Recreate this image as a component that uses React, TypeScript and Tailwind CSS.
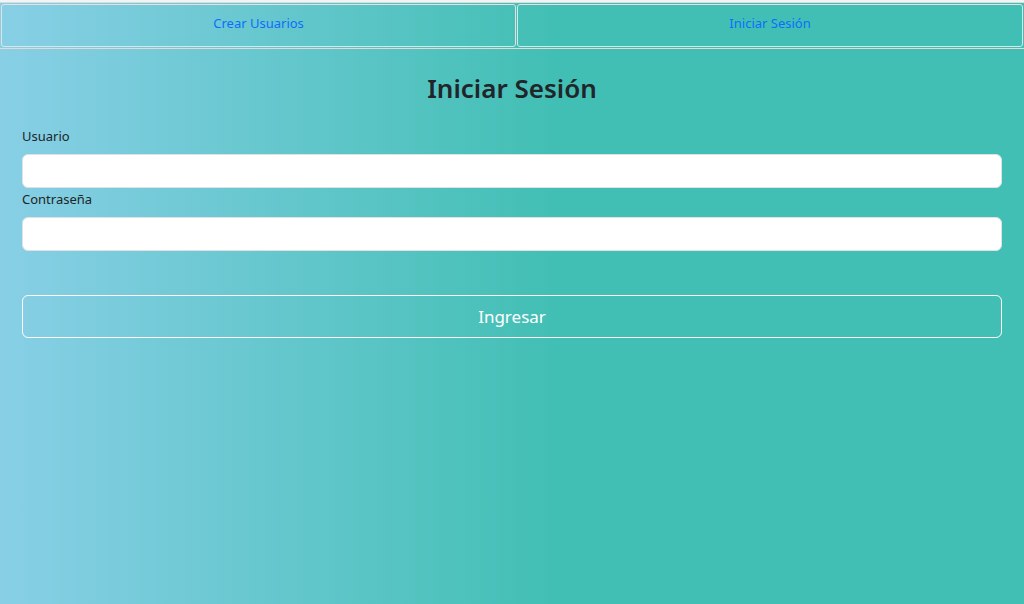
export default function App() {
    return (
        <div className="min-h-[604px] bg-[linear-gradient(to_right,#88cfe6_0%,#42bfb4_54%,#41bfb4_100%)] font-['Noto_Sans',sans-serif] text-[#212529]">
            <div className="h-[2px] bg-[#f3f3f3]" />
            <nav className="flex gap-[1px] border-y border-[#dcdcdc] p-[1px]">
                <button className="h-[43px] flex-auto rounded-[3px] border border-[#e2e2e2] pb-[4px] text-[13px] text-[#0d6efd]">
                    Crear Usuarios
                </button>
                <button className="h-[43px] flex-auto rounded-[3px] border border-[#e2e2e2] pb-[4px] text-[13px] text-[#0d6efd]">
                    Iniciar Sesión
                </button>
            </nav>
            <main className="px-[22px]">
                <h1 className="mt-[23px] text-center text-[26px] font-semibold leading-[32px]">Iniciar Sesión</h1>
                <form className="mt-[22px]">
                    <label className="block text-[13px] leading-[20px]">Usuario</label>
                    <input
                        type="text"
                        className="mt-[8px] block h-[34px] w-full rounded-[6px] border border-[#dee2e6] bg-white px-3"
                    />
                    <label className="mt-[1px] block text-[13px] leading-[20px]">Contraseña</label>
                    <input
                        type="password"
                        className="mt-[8px] block h-[34px] w-full rounded-[6px] border border-[#dee2e6] bg-white px-3"
                    />
                    <button
                        type="submit"
                        className="mt-[44px] block h-[43px] w-full rounded-[6px] border border-white text-[17px] text-white"
                    >
                        Ingresar
                    </button>
                </form>
            </main>
        </div>
    );
}
